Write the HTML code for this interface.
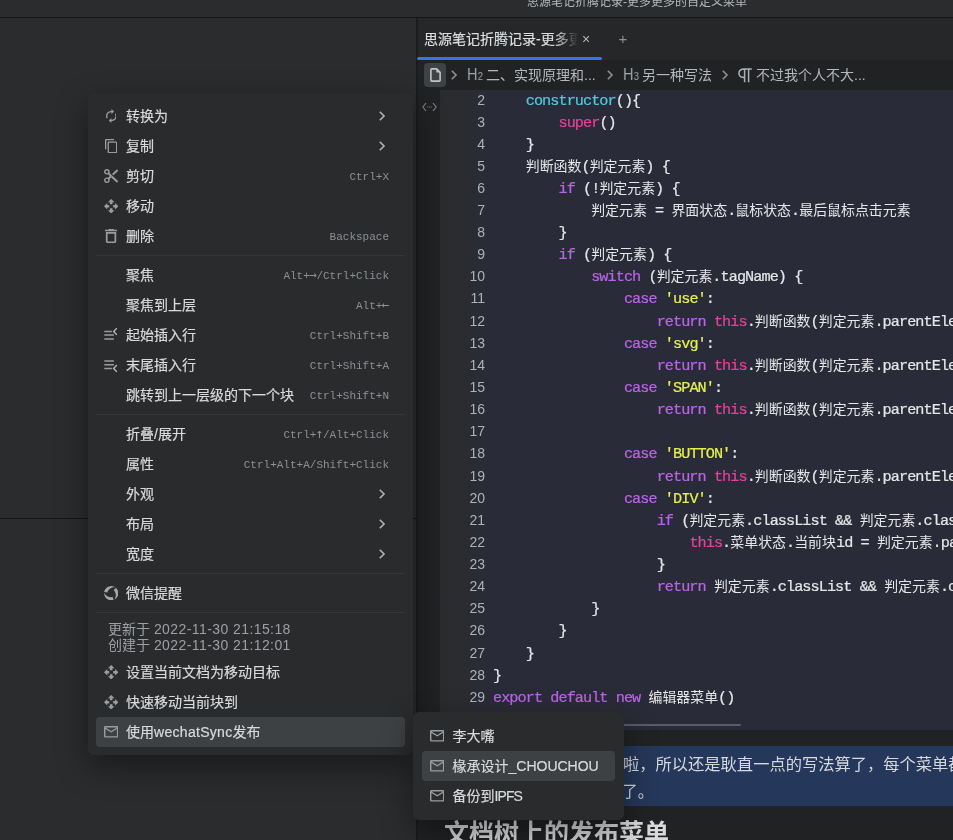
<!DOCTYPE html>
<html lang="zh-CN">
<head>
<meta charset="utf-8">
<title>思源笔记折腾记录-更多更多的自定义菜单</title>
<style>
*{box-sizing:border-box;margin:0;padding:0}
html,body{width:953px;height:840px;overflow:hidden;background:#2a2c2e}
body{position:relative;font-family:"Liberation Sans","Noto Sans CJK SC",sans-serif;font-size:14px;color:#d8dadc}
.abs{position:absolute;will-change:transform}
/* title bar */
#titlebar{left:0;top:0;width:953px;height:17px;background:#2a2c2e}
#titleline{left:0;top:17px;width:953px;height:1px;background:#141618}
#title{left:437px;top:-6.500px;width:400px;text-align:center;font-size:12px;line-height:17px;color:#b4b9be;white-space:nowrap}
/* left panel */
#leftline{left:0;top:518px;width:416px;height:1px;background:#141618}
#vline{left:416px;top:18px;width:2px;height:822px;background:#1a1c1e}
/* editor */
#editor{left:418px;top:18px;width:535px;height:822px;background:#202224}
#tabbar{left:418px;top:18px;width:535px;height:42px;background:#252729}
#tabtext{left:424px;top:28px;width:154px;-webkit-text-stroke:.2px;height:22px;line-height:22px;font-size:14px;color:#dcdee0;white-space:nowrap;overflow:hidden;-webkit-mask-image:linear-gradient(90deg,#000 85%,transparent 100%);mask-image:linear-gradient(90deg,#000 85%,transparent 100%)}
#tabul{left:417px;top:57px;width:185px;height:3px;background:#3573f0;border-radius:2px}
#crumb{left:418px;top:60px;width:535px;height:30px;background:#202224}
#docbtn{left:424px;top:63px;width:22px;height:24px;background:#3f4244;border-radius:4px}
.ct{top:64px;height:22px;line-height:22px;font-size:14px;color:#b4b8bc;white-space:nowrap}
.chev{width:8px;height:10px;fill:none;stroke:#8e9296;stroke-width:1.600}
.hh{font-size:16.300px;color:#a0a4a8;transform:scaleX(.88);transform-origin:0 50%;line-height:21px}
.hh span{font-size:10.600px;margin-left:.5px}
/* code block */
#gutter{left:440px;top:90px;width:48px;height:640px;background:linear-gradient(90deg,#2a2c2e 0%,#2a2c31 55%,#2a2b37 100%)}
#codebg{left:488px;top:90px;width:465px;height:640px;background:#2a2b38}
#lnums{left:440px;top:89.700px;width:45px;text-align:right;font-size:14px;color:#aab2ba;white-space:pre}
#code{left:493px;top:90.700px;-webkit-text-stroke:.22px;width:460px;overflow:hidden;font-family:"Liberation Mono","Noto Sans CJK SC",monospace;font-size:15.200px;letter-spacing:-.932px;color:#e6e6e8;white-space:pre}
#code b{font-weight:normal;font-size:13.93px;line-height:1;-webkit-text-stroke:0;letter-spacing:0}
.k{color:#bb63e8}.p{color:#e8409a}.s{color:#e6f04f}.f{color:#50c8e0}
#hscroll{left:493px;top:724px;width:248px;height:2px;background:#5a5c66;border-radius:1px}
/* paragraph */
#para{left:440px;top:746px;width:513px;height:60px;background:#25375a}
.pl{left:440px;height:26px;line-height:26px;font-size:16.27px;color:#d6d9dd;white-space:nowrap;width:513px;overflow:hidden}
#h2{left:443.500px;top:814.800px;font-size:25px;line-height:36px;font-weight:bold;color:#d8dadc;white-space:nowrap}
/* menus */
.menu{background:#292b2d;border-radius:6px;box-shadow:0 12px 32px rgba(0,0,0,.42)}
#menu{left:88px;top:93px;width:325px;height:662px}
#submenu{left:413px;top:712px;width:211px;height:108px}
.it{position:absolute;left:8px;width:309px;height:30px;border-radius:4px}
.it.on{background:#3e4143}
.it .lb{position:absolute;left:30px;top:0;line-height:30px;font-size:14px;color:#d8dadc;white-space:nowrap;font-weight:400;-webkit-text-stroke:.2px}
.it .ac{position:absolute;right:16px;top:.7px;line-height:30px;font-size:11px;color:#8e9194;font-family:"Liberation Mono",monospace;white-space:nowrap}
.it svg.ic{position:absolute;left:8px;top:8px;width:14px;height:14px;fill:#9a9da0}
.it svg.ar{position:absolute;right:19px;top:10px;width:8px;height:10px;fill:none;stroke:#b0b3b6;stroke-width:1.6}
.it svg.ic2{position:absolute;fill:#9a9da0}
.aw{font-style:normal;font-family:"DejaVu Sans Mono",monospace;font-size:13px;line-height:1;display:inline-block;width:6.600px;text-align:center;text-indent:-.6px}
.ls{letter-spacing:.42px}
.sep{position:absolute;left:8px;width:309px;height:1px;background:#34373a}
.info{position:absolute;left:20px;font-size:14px;line-height:16px;color:#9da0a3;white-space:nowrap}
</style>
</head>
<body>
<div class="abs" id="titlebar"></div>
<div class="abs" id="title">思源笔记折腾记录-更多更多的自定义菜单</div>
<div class="abs" id="titleline"></div>
<div class="abs" id="leftline"></div>
<div class="abs" id="editor"></div>
<div class="abs" id="vline"></div>
<div class="abs" id="tabbar"></div>
<div class="abs" id="tabtext">思源笔记折腾记录-更多更多的自定义菜单</div>
<div class="abs" id="tabul"></div>
<div class="abs" id="crumb"></div>
<div class="abs" id="docbtn"></div>
<svg class="abs" style="left:429.500px;top:68px;width:11px;height:14px" viewBox="0 0 11 14"><path d="M1.800 .9H6.600L10.100 4.400V12.200Q10.100 13.100 9.200 13.100H1.800Q.9 13.100 .9 12.200V1.800Q.9 .9 1.800 .9Z" fill="none" stroke="#c2c5c8" stroke-width="1.600" stroke-linejoin="round"/><path d="M6.400 .9V4.600H10.100Z" fill="#c2c5c8"/></svg>
<svg class="abs chev" style="left:450px;top:70px" viewBox="0 0 8 10"><path d="M1.800 .8L6 5L1.800 9.200"/></svg>
<div class="abs ct hh" style="left:466.800px">H<span>2</span></div>
<div class="abs ct" style="left:486px">二、实现原理和...</div>
<svg class="abs chev" style="left:606px;top:70px" viewBox="0 0 8 10"><path d="M1.800 .8L6 5L1.800 9.200"/></svg>
<div class="abs ct hh" style="left:622.800px">H<span>3</span></div>
<div class="abs ct" style="left:642px">另一种写法</div>
<svg class="abs chev" style="left:721px;top:70px" viewBox="0 0 8 10"><path d="M1.800 .8L6 5L1.800 9.200"/></svg>
<svg class="abs" style="left:738px;top:68px;width:14px;height:14.500px" viewBox="0 0 14 14.500"><path d="M6.600 1H13.800M6.600 1C2.600 1 .9 3.100 .9 5.300C.9 7.700 2.800 9.600 6.600 9.600M6.600 1V14.200M10.600 1V14.200" fill="none" stroke="#aeb1b4" stroke-width="1.500"/></svg>
<div class="abs ct" style="left:756px">不过我个人不大...</div>
<svg class="abs" style="left:421.500px;top:102px;width:15px;height:10px" viewBox="0 0 15 10"><path d="M4 1L.9 5L4 9M11 1L14.100 5L11 9" fill="none" stroke="#7c8084" stroke-width="1.200"/><path d="M5.300 5H6.300M7 5H8M8.700 5H9.700" stroke="#7c8084" stroke-width="1.100" fill="none"/></svg>
<div class="abs" style="left:585.800px;top:28px;width:0;font-size:14px;line-height:22px;color:#b4b8bc"><span style="position:absolute;left:-4.100px">×</span></div>
<div class="abs" style="left:622.800px;top:28px;width:0;font-size:15px;line-height:22px;color:#8e9296"><span style="position:absolute;left:-4.400px">+</span></div>
<div class="abs" id="gutter"></div>
<div class="abs" id="codebg"></div>
<div class="abs" id="lnums"><div style="height:21.98px;line-height:21.98px">2</div><div style="height:21.98px;line-height:21.98px">3</div><div style="height:21.98px;line-height:21.98px">4</div><div style="height:21.98px;line-height:21.98px">5</div><div style="height:21.98px;line-height:21.98px">6</div><div style="height:21.98px;line-height:21.98px">7</div><div style="height:21.98px;line-height:21.98px">8</div><div style="height:21.98px;line-height:21.98px">9</div><div style="height:21.98px;line-height:21.98px">10</div><div style="height:21.98px;line-height:21.98px">11</div><div style="height:22.13px;line-height:22.13px">12</div><div style="height:22.13px;line-height:22.13px">13</div><div style="height:22.13px;line-height:22.13px">14</div><div style="height:22.13px;line-height:22.13px">15</div><div style="height:22.13px;line-height:22.13px">16</div><div style="height:22.13px;line-height:22.13px">17</div><div style="height:22.13px;line-height:22.13px">18</div><div style="height:22.13px;line-height:22.13px">19</div><div style="height:22.13px;line-height:22.13px">20</div><div style="height:22.13px;line-height:22.13px">21</div><div style="height:22.13px;line-height:22.13px">22</div><div style="height:22.13px;line-height:22.13px">23</div><div style="height:22.13px;line-height:22.13px">24</div><div style="height:22.13px;line-height:22.13px">25</div><div style="height:22.13px;line-height:22.13px">26</div><div style="height:22.13px;line-height:22.13px">27</div><div style="height:22.13px;line-height:22.13px">28</div><div style="height:22.13px;line-height:22.13px">29</div></div>
<div class="abs" id="code"><div style="height:21.98px;line-height:21.98px">    <span class="f">constructor</span>(){</div><div style="height:21.98px;line-height:21.98px">        <span class="p">super</span>()</div><div style="height:21.98px;line-height:21.98px">    }</div><div style="height:21.98px;line-height:21.98px">    <b>判断函数</b>(<b>判定元素</b>) {</div><div style="height:21.98px;line-height:21.98px">        <span class="k">if</span> (!<b>判定元素</b>) {</div><div style="height:21.98px;line-height:21.98px">            <b>判定元素</b> = <b>界面状态</b>.<b>鼠标状态</b>.<b>最后鼠标点击元素</b></div><div style="height:21.98px;line-height:21.98px">        }</div><div style="height:21.98px;line-height:21.98px">        <span class="k">if</span> (<b>判定元素</b>) {</div><div style="height:21.98px;line-height:21.98px">            <span class="k">switch</span> (<b>判定元素</b>.tagName) {</div><div style="height:21.98px;line-height:21.98px">                <span class="k">case</span> <span class="s">'use'</span>:</div><div style="height:22.13px;line-height:22.13px">                    <span class="k">return</span> <span class="p">this</span>.<b>判断函数</b>(<b>判定元素</b>.parentElement)</div><div style="height:22.13px;line-height:22.13px">                <span class="k">case</span> <span class="s">'svg'</span>:</div><div style="height:22.13px;line-height:22.13px">                    <span class="k">return</span> <span class="p">this</span>.<b>判断函数</b>(<b>判定元素</b>.parentElement)</div><div style="height:22.13px;line-height:22.13px">                <span class="k">case</span> <span class="s">'SPAN'</span>:</div><div style="height:22.13px;line-height:22.13px">                    <span class="k">return</span> <span class="p">this</span>.<b>判断函数</b>(<b>判定元素</b>.parentElement)</div><div style="height:22.13px;line-height:22.13px"> </div><div style="height:22.13px;line-height:22.13px">                <span class="k">case</span> <span class="s">'BUTTON'</span>:</div><div style="height:22.13px;line-height:22.13px">                    <span class="k">return</span> <span class="p">this</span>.<b>判断函数</b>(<b>判定元素</b>.parentElement)</div><div style="height:22.13px;line-height:22.13px">                <span class="k">case</span> <span class="s">'DIV'</span>:</div><div style="height:22.13px;line-height:22.13px">                    <span class="k">if</span> (<b>判定元素</b>.classList &amp;&amp; <b>判定元素</b>.classList.contains(&quot;protyle-wysiwyg&quot;)) {</div><div style="height:22.13px;line-height:22.13px">                        <span class="p">this</span>.<b>菜单状态</b>.<b>当前块</b>id = <b>判定元素</b>.parentElement.getAttribute(&quot;data-node-id&quot;)</div><div style="height:22.13px;line-height:22.13px">                    }</div><div style="height:22.13px;line-height:22.13px">                    <span class="k">return</span> <b>判定元素</b>.classList &amp;&amp; <b>判定元素</b>.classList.contains(&quot;protyle-wysiwyg&quot;)</div><div style="height:22.13px;line-height:22.13px">            }</div><div style="height:22.13px;line-height:22.13px">        }</div><div style="height:22.13px;line-height:22.13px">    }</div><div style="height:22.13px;line-height:22.13px">}</div><div style="height:22.13px;line-height:22.13px"><span class="k">export</span> <span class="k">default</span> <span class="k">new</span> <b>编辑器菜单</b>()</div></div>
<div class="abs" id="hscroll"></div>
<div class="abs" id="para"></div>
<div class="abs pl" style="top:751px"><span style="position:absolute;left:183px">啦，所以还是耿直一点的写法算了，每个菜单都写一遍</span></div>
<div class="abs pl" style="top:778px"><span style="position:absolute;left:181.500px">了。</span></div>
<div class="abs" id="h2">文档树上的发布菜单</div>
<div class="abs menu" id="menu">
<div class="it" style="top:8px"><svg class="ic2" preserveAspectRatio="none" style="left:9.5px;top:8.0px;width:10.8px;height:14.0px" viewBox="4 1 16 22"><path d="M12 6v3l4-4-4-4v3c-4.42 0-8 3.58-8 8 0 1.57.46 3.03 1.24 4.26L6.7 14.8c-.45-.83-.7-1.79-.7-2.8 0-3.31 2.69-6 6-6zm6.76 1.74L17.300 9.2c.44.84.7 1.79.7 2.8 0 3.31-2.69 6-6 6v-3l-4 4 4 4v-3c4.42 0 8-3.58 8-8 0-1.57-.46-3.03-1.24-4.260z"/></svg><span class="lb">转换为</span><svg class="ar" viewBox="0 0 8 10"><path d="M1.800 .8L6 5L1.800 9.200"/></svg></div>
<div class="it" style="top:38px"><svg class="ic2" preserveAspectRatio="none" style="left:8.8px;top:8.0px;width:12.3px;height:14.2px" viewBox="2 1 19 22"><path d="M16 1H4c-1.100 0-2 .9-2 2v14h2V3h12V1zm3 4H8c-1.100 0-2 .9-2 2v14c0 1.100.9 2 2 2h11c1.100 0 2-.9 2-2V7c0-1.100-.9-2-2-2zm0 16H8V7h11v14z"/></svg><span class="lb">复制</span><svg class="ar" viewBox="0 0 8 10"><path d="M1.800 .8L6 5L1.800 9.200"/></svg></div>
<div class="it" style="top:68px"><svg class="ic2" preserveAspectRatio="none" style="left:7.9px;top:8.1px;width:14.5px;height:14.0px" viewBox="2 2 20 20"><path d="M9.64 7.64c.23-.5.36-1.050.36-1.640 0-2.210-1.790-4-4-4S2 3.790 2 6s1.790 4 4 4c.59 0 1.140-.13 1.640-.36L10 12l-2.360 2.360C7.140 14.130 6.590 14 6 14c-2.210 0-4 1.790-4 4s1.790 4 4 4 4-1.790 4-4c0-.59-.13-1.140-.36-1.640L12 14l7 7h3v-1L9.640 7.640zM6 8c-1.100 0-2-.89-2-2s.9-2 2-2 2 .89 2 2-.9 2-2 2zm0 12c-1.100 0-2-.89-2-2s.9-2 2-2 2 .89 2 2-.9 2-2 2zm6-7.500c-.28 0-.5-.22-.5-.5s.22-.5.5-.5.5.22.5.5-.22.5-.5.5zM19 3l-6 6 2 2 7-7V3z"/></svg><span class="lb">剪切</span><span class="ac">Ctrl+X</span></div>
<div class="it" style="top:98px"><svg class="ic2" preserveAspectRatio="none" style="left:7.8px;top:7.8px;width:14.4px;height:14.5px" viewBox="1 1 22 22"><path d="M10 9h4V6h3l-5-5-5 5h3v3zm-1 1H6V7l-5 5 5 5v-3h3v-4zm14 2l-5-5v3h-3v4h3v3l5-5zm-9 3h-4v3H7l5 5 5-5h-3v-3z"/></svg><span class="lb">移动</span></div>
<div class="it" style="top:128px"><svg class="ic2" preserveAspectRatio="none" style="left:9.0px;top:8.1px;width:12.1px;height:14.0px" viewBox="5 3 14 18"><path d="M6 19c0 1.100.9 2 2 2h8c1.100 0 2-.9 2-2V7H6v12zM8 9h8v10H8V9zm7.500-5l-1-1h-5l-1 1H5v2h14V4z"/></svg><span class="lb">删除</span><span class="ac">Backspace</span></div>
<div class="sep" style="top:162px"></div>
<div class="it" style="top:167px"><span class="lb">聚焦</span><span class="ac">Alt+<i class="aw">→</i>/Ctrl+Click</span></div>
<div class="it" style="top:197px"><span class="lb">聚焦到上层</span><span class="ac">Alt+<i class="aw">←</i></span></div>
<div class="it" style="top:227px"><svg class="ic2" style="left:8px;top:7px;width:15px;height:16px" viewBox="0 0 15 16"><path d="M.3 4.400H7.900M.3 8.100H9.900M.3 11.900H9.900" stroke="#9a9da0" stroke-width="1.500" fill="none"/><path d="M12.800 1.200L9.600 4.400L12.800 7.800" stroke="#b4b7ba" stroke-width="1.400" fill="none"/></svg><span class="lb">起始插入行</span><span class="ac">Ctrl+Shift+B</span></div>
<div class="it" style="top:257px"><svg class="ic2" style="left:8px;top:7px;width:15px;height:16px" viewBox="0 0 15 16"><path d="M.3 4.100H9.900M.3 7.800H9.900M.3 11.400H7.900" stroke="#9a9da0" stroke-width="1.500" fill="none"/><path d="M12.800 8.100L9.600 11.400L12.800 14.700" stroke="#b4b7ba" stroke-width="1.400" fill="none"/></svg><span class="lb">末尾插入行</span><span class="ac">Ctrl+Shift+A</span></div>
<div class="it" style="top:287px"><span class="lb">跳转到上一层级的下一个块</span><span class="ac">Ctrl+Shift+N</span></div>
<div class="sep" style="top:321px"></div>
<div class="it" style="top:326px"><span class="lb">折叠/展开</span><span class="ac">Ctrl+<i class="aw">↑</i>/Alt+Click</span></div>
<div class="it" style="top:356px"><span class="lb">属性</span><span class="ac">Ctrl+Alt+A/Shift+Click</span></div>
<div class="it" style="top:386px"><span class="lb">外观</span><svg class="ar" viewBox="0 0 8 10"><path d="M1.800 .8L6 5L1.800 9.200"/></svg></div>
<div class="it" style="top:416px"><span class="lb">布局</span><svg class="ar" viewBox="0 0 8 10"><path d="M1.800 .8L6 5L1.800 9.200"/></svg></div>
<div class="it" style="top:446px"><span class="lb">宽度</span><svg class="ar" viewBox="0 0 8 10"><path d="M1.800 .8L6 5L1.800 9.200"/></svg></div>
<div class="sep" style="top:480px"></div>
<div class="it" style="top:485px"><svg class="ic2" style="left:7.700000000000003px;top:7.85px;width:14.400px;height:14.400px" viewBox="-7.200 -7.200 14.400 14.400"><path fill="#a4a7aa" d="M-6.99 -1.23L-6.79 -2.08L-6.48 -2.90L-6.07 -3.68L-5.58 -4.40L-4.99 -5.05L-4.33 -5.62L-3.61 -6.11L-2.83 -6.51L-2.01 -6.81L-1.16 -7.01L-0.29 -7.09L0.59 -7.08L1.45 -6.95L2.30 -6.72L3.11 -6.38L3.87 -5.95L3.87 -5.95L2.89 -5.94L1.99 -5.83L1.18 -5.64L0.45 -5.40L-0.21 -5.10L-0.79 -4.78L-1.31 -4.43L-1.77 -4.06L-2.17 -3.68L-2.53 -3.29L-2.85 -2.88L-3.13 -2.47L-3.37 -2.04L-3.57 -1.60L-3.73 -1.15L-3.84 -0.68Z M4.56 -5.44L5.20 -4.84L5.75 -4.16L6.22 -3.42L6.59 -2.63L6.87 -1.80L7.04 -0.94L7.10 -0.07L7.05 0.80L6.90 1.66L6.64 2.50L6.29 3.30L5.83 4.05L5.29 4.73L4.67 5.35L3.98 5.88L3.22 6.33L3.22 6.33L3.70 5.47L4.05 4.64L4.30 3.84L4.45 3.09L4.52 2.37L4.53 1.71L4.49 1.08L4.40 0.50L4.27 -0.04L4.11 -0.55L3.92 -1.03L3.70 -1.48L3.45 -1.90L3.17 -2.29L2.86 -2.66L2.51 -2.99Z M2.43 6.67L1.59 6.92L0.73 7.06L-0.15 7.10L-1.02 7.03L-1.87 6.85L-2.70 6.57L-3.49 6.18L-4.22 5.71L-4.89 5.14L-5.49 4.50L-6.00 3.80L-6.42 3.03L-6.75 2.22L-6.97 1.37L-7.08 0.50L-7.09 -0.37L-7.09 -0.37L-6.59 0.47L-6.05 1.19L-5.48 1.80L-4.90 2.31L-4.32 2.73L-3.74 3.07L-3.18 3.35L-2.63 3.56L-2.10 3.72L-1.58 3.84L-1.07 3.91L-0.57 3.95L-0.08 3.94L0.40 3.89L0.87 3.80L1.33 3.66Z"/></svg><span class="lb">微信提醒</span></div>
<div class="sep" style="top:519px"></div>
<div class="info" style="top:528px">更新于 <span class="ls">2022-11-30 21:15:18</span></div>
<div class="info" style="top:544px">创建于 <span class="ls">2022-11-30 21:12:01</span></div>
<div class="it" style="top:564px"><svg class="ic2" preserveAspectRatio="none" style="left:7.8px;top:7.8px;width:14.4px;height:14.5px" viewBox="1 1 22 22"><path d="M10 9h4V6h3l-5-5-5 5h3v3zm-1 1H6V7l-5 5 5 5v-3h3v-4zm14 2l-5-5v3h-3v4h3v3l5-5zm-9 3h-4v3H7l5 5 5-5h-3v-3z"/></svg><span class="lb">设置当前文档为移动目标</span></div>
<div class="it" style="top:594px"><svg class="ic2" preserveAspectRatio="none" style="left:7.8px;top:7.8px;width:14.4px;height:14.5px" viewBox="1 1 22 22"><path d="M10 9h4V6h3l-5-5-5 5h3v3zm-1 1H6V7l-5 5 5 5v-3h3v-4zm14 2l-5-5v3h-3v4h3v3l5-5zm-9 3h-4v3H7l5 5 5-5h-3v-3z"/></svg><span class="lb">快速移动当前块到</span></div>
<div class="it on" style="top:624px"><svg class="ic2" preserveAspectRatio="none" style="left:7.9px;top:9.0px;width:14.4px;height:11.6px" viewBox="2 4 20 16"><path d="M20 4H4c-1.100 0-1.990.9-1.990 2L2 18c0 1.100.9 2 2 2h16c1.100 0 2-.9 2-2V6c0-1.100-.9-2-2-2zm0 14H4V8l8 5 8-5v10zm-8-7L4 6h16l-8 5z"/></svg><span class="lb">使用<span style="letter-spacing:.3px">wechatSync</span>发布</span></div>
</div>
<div class="abs menu" id="submenu">
<div class="it" style="top:9px;width:193px;left:9px"><svg class="ic2" preserveAspectRatio="none" style="left:7.600px;top:9.200px;width:14.400px;height:11.600px" viewBox="2 4 20 16"><path d="M20 4H4c-1.100 0-1.990.9-1.990 2L2 18c0 1.100.9 2 2 2h16c1.100 0 2-.9 2-2V6c0-1.100-.9-2-2-2zm0 14H4V8l8 5 8-5v10zm-8-7L4 6h16l-8 5z"/></svg><span class="lb" style="left:30.500px;font-weight:400">李大嘴</span></div>
<div class="it on" style="top:39px;width:193px;left:9px"><svg class="ic2" preserveAspectRatio="none" style="left:7.600px;top:9.200px;width:14.400px;height:11.600px" viewBox="2 4 20 16"><path d="M20 4H4c-1.100 0-1.990.9-1.990 2L2 18c0 1.100.9 2 2 2h16c1.100 0 2-.9 2-2V6c0-1.100-.9-2-2-2zm0 14H4V8l8 5 8-5v10zm-8-7L4 6h16l-8 5z"/></svg><span class="lb" style="left:30.500px;font-weight:400">椽承设计_CHOUCHOU</span></div>
<div class="it" style="top:69px;width:193px;left:9px"><svg class="ic2" preserveAspectRatio="none" style="left:7.600px;top:9.200px;width:14.400px;height:11.600px" viewBox="2 4 20 16"><path d="M20 4H4c-1.100 0-1.990.9-1.990 2L2 18c0 1.100.9 2 2 2h16c1.100 0 2-.9 2-2V6c0-1.100-.9-2-2-2zm0 14H4V8l8 5 8-5v10zm-8-7L4 6h16l-8 5z"/></svg><span class="lb" style="left:30.500px;font-weight:400">备份到<span style="letter-spacing:-.9px">IPFS</span></span></div>
</div>
</body>
</html>
